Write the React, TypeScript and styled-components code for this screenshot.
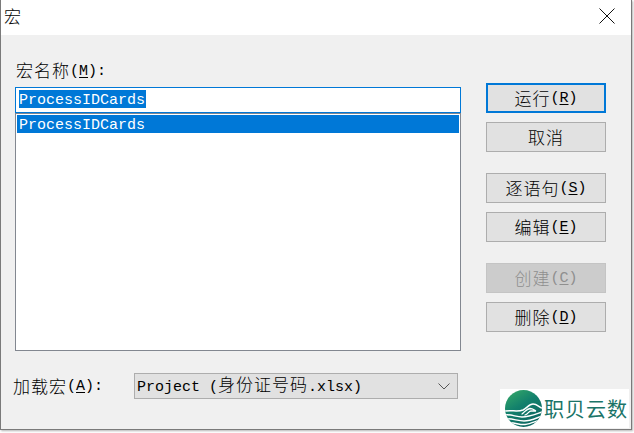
import React from "react";
import styled, { createGlobalStyle } from "styled-components";

const Global = createGlobalStyle`
  html, body { margin: 0; padding: 0; background: #fff; }
  body { width: 634px; height: 433px; overflow: hidden; }
`;

const Win = styled.div`
  box-sizing: border-box;
  width: 632px;
  height: 430px;
  display: flex;
  flex-direction: column;
  background: #f0f0f0;
  border: 1px solid #7a7a7a;
  border-top: none;
  box-shadow: 1px 1px 2px #b4b4b4;
  position: relative;
  color: #000;
`;

const TitleBar = styled.header`
  height: 35px;
  flex: none;
  box-sizing: border-box;
  background: #fff;
  display: flex;
  align-items: center;
  justify-content: space-between;
  padding: 0 16px 3px 3px;
`;

const Zh = styled.span`
  font-family: "Noto Sans CJK SC", sans-serif;
  font-size: 17px;
  font-weight: 300;
  line-height: 20px;
  letter-spacing: 1px;
`;

const Lat = styled.span`
  font-family: "Liberation Mono", monospace;
  font-size: 15px;
  line-height: 20px;
  padding-top: 2px;
`;

const Mn = styled.u`
  text-underline-offset: 2px;
  text-decoration-thickness: 1px;
`;

const Body = styled.div`
  flex: 1;
  display: flex;
  flex-direction: column;
  padding: 25px 0 0 12px;
`;

const Main = styled.div`
  display: flex;
  align-items: flex-start;
`;

const Left = styled.div`
  width: 473px;
  display: flex;
  flex-direction: column;
  align-items: flex-start;
  padding-left: 2px;
  box-sizing: border-box;
`;

const FieldLabel = styled.label`
  height: 27px;
  display: flex;
  align-items: flex-start;
  white-space: pre;
  padding-left: 1px;
`;

const NameInput = styled.div`
  box-sizing: border-box;
  width: 446px;
  height: 26px;
  background: #fff;
  border: 1px solid #0078d7;
  padding: 2px 0 0 3px;
  display: flex;
  align-items: flex-start;
`;

const SelText = styled.span`
  box-sizing: border-box;
  background: #0078d7;
  color: #fff;
  height: 18px;
  display: inline-flex;
  align-items: center;
  padding: 2px 1px 0 0;
`;

const MacroList = styled.div`
  box-sizing: border-box;
  width: 446px;
  height: 238px;
  background: #fff;
  border: 1px solid #828790;
  padding: 1px;
`;

const ListRow = styled.div`
  box-sizing: border-box;
  height: 18px;
  background: #0078d7;
  color: #fff;
  display: flex;
  align-items: center;
  padding: 2px 0 0 2px;
`;

const Buttons = styled.div`
  display: flex;
  flex-direction: column;
  padding-top: 23px;
  width: 120px;
`;

const Btn = styled.div<{ $primary?: boolean; $off?: boolean; $gap?: number }>`
  box-sizing: border-box;
  width: 120px;
  height: 30px;
  margin-bottom: ${(p) => p.$gap ?? 9}px;
  display: flex;
  align-items: center;
  justify-content: center;
  white-space: pre;
  background: ${(p) => (p.$off ? "#cccccc" : "#e1e1e1")};
  color: ${(p) => (p.$off ? "#8f8f8f" : "#000")};
  border: ${(p) => (p.$primary ? "2px solid #0078d7" : p.$off ? "1px solid #c4c4c4" : "1px solid #adadad")};
`;

const Footer = styled.div`
  display: flex;
  align-items: center;
  margin-top: 22px;
  height: 26px;
`;

const LoadLabel = styled.label`
  width: 121px;
  white-space: pre;
  display: flex;
  align-items: center;
`;

const Combo = styled.div`
  box-sizing: border-box;
  width: 324px;
  height: 26px;
  background: #e1e1e1;
  border: 1px solid #adadad;
  display: flex;
  align-items: center;
  justify-content: space-between;
  padding: 0 7px 0 2px;
  white-space: pre;
`;

const Badge = styled.div`
  position: absolute;
  right: 2px;
  bottom: 1px;
  width: 129px;
  height: 39px;
  background: #fff;
  display: flex;
  align-items: center;
  padding-left: 5px;
  box-sizing: border-box;
  gap: 2px;
`;

const BadgeText = styled.span`
  font-family: "Noto Sans CJK SC", sans-serif;
  font-size: 20px;
  font-weight: 400;
  line-height: 24px;
  letter-spacing: 1px;
  color: #1a7468;
  white-space: nowrap;
`;

const Logo = () => (
  <svg width="37" height="37" viewBox="0 0 37 37" aria-hidden="true">
    <defs>
      <linearGradient id="lg" x1="0.1" y1="0" x2="0.7" y2="1">
        <stop offset="0" stopColor="#35a868" />
        <stop offset="0.45" stopColor="#12806c" />
        <stop offset="1" stopColor="#0c6460" />
      </linearGradient>
      <clipPath id="cp"><circle cx="18.5" cy="18.5" r="18.5" /></clipPath>
    </defs>
    <circle cx="18.5" cy="18.5" r="18.5" fill="url(#lg)" />
    <g clipPath="url(#cp)" fill="none" stroke="#fff" strokeLinecap="round">
      <path d="M0 21 C7 20 13 22 18 20 C22 18 24 14 28 14 C32 14 34 17 37 18" strokeWidth="1.5" />
      <path d="M17 24 C20 22 21 19 25 18.5 C28 18.5 29 20 31 21 L26 21 C24 21 23 24 20 25" strokeWidth="1.3" />
      <path d="M0 25 C6 24 11 27 17 27 C24 27 31 24 37 22" strokeWidth="1.5" />
      <path d="M0 29 C7 28 12 31 19 31 C26 31 31 28 37 26" strokeWidth="1.5" />
      <path d="M3 33 C9 32 14 35 20 34.5 C25 34 29 32 35 30" strokeWidth="1.5" />
    </g>
  </svg>
);

const Label = ({ zh, m, tail = "" }: { zh: string; m: string; tail?: string }) => (
  <>
    <Zh>{zh}</Zh>
    <Lat>(<Mn>{m}</Mn>){tail}</Lat>
  </>
);

export default function App() {
  return (
    <>
      <Global />
      <Win>
        <TitleBar>
          <Zh>宏</Zh>
          <svg width="16" height="16" viewBox="0 0 16 16" aria-hidden="true">
            <path d="M0.5 0.5 L15.5 15.5 M15.5 0.5 L0.5 15.5" stroke="#111" strokeWidth="1" fill="none" />
          </svg>
        </TitleBar>
        <Body>
          <Main>
            <Left>
              <FieldLabel><Label zh="宏名称" m="M" tail=":" /></FieldLabel>
              <NameInput><SelText><Lat>ProcessIDCards</Lat></SelText></NameInput>
              <MacroList><ListRow><Lat>ProcessIDCards</Lat></ListRow></MacroList>
            </Left>
            <Buttons>
              <Btn $primary><Label zh="运行" m="R" /></Btn>
              <Btn $gap={21}><Zh>取消</Zh></Btn>
              <Btn><Label zh="逐语句" m="S" /></Btn>
              <Btn $gap={21}><Label zh="编辑" m="E" /></Btn>
              <Btn $off><Label zh="创建" m="C" /></Btn>
              <Btn $gap={0}><Label zh="删除" m="D" /></Btn>
            </Buttons>
          </Main>
          <Footer>
            <LoadLabel><Label zh="加载宏" m="A" tail=":" /></LoadLabel>
            <Combo>
              <span><Lat>Project (</Lat><Zh>身份证号码</Zh><Lat>.xlsx)</Lat></span>
              <svg width="12" height="7" viewBox="0 0 12 7" aria-hidden="true">
                <path d="M0.5 0.5 L6 6 L11.5 0.5" stroke="#555" strokeWidth="1" fill="none" />
              </svg>
            </Combo>
          </Footer>
        </Body>
        <Badge>
          <Logo />
          <BadgeText>职贝云数</BadgeText>
        </Badge>
      </Win>
    </>
  );
}
